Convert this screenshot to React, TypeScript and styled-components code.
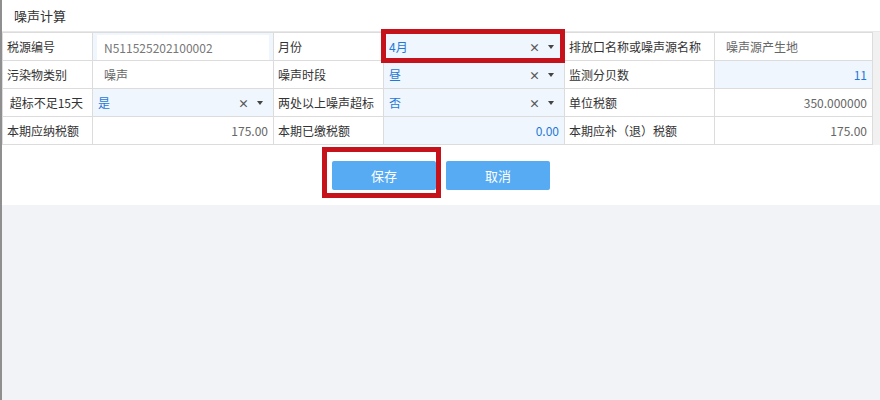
import styled, { createGlobalStyle, css } from 'styled-components';

const GlobalStyle = createGlobalStyle`
  html, body {
    margin: 0;
    padding: 0;
  }
  body {
    font-family: "Noto Sans CJK SC", "Noto Sans", "Liberation Sans", sans-serif;
    font-size: 12px;
    color: #333;
  }
`;

const Page = styled.div`
  display: flex;
  flex-direction: column;
  height: 400px;
  box-sizing: border-box;
  border-left: 2px solid #8f8f8f;
  background: #f2f3f7;
`;

const Panel = styled.div`
  background: #fff;
  display: flex;
  flex-direction: column;
`;

const Header = styled.div`
  height: 31px;
  display: flex;
  align-items: center;
  padding-left: 12px;
  font-size: 13px;
  color: #333;
  border-bottom: 1px solid #e8e8e8;
`;

const TableRow = styled.div`
  display: flex;
`;

const Grid = styled.div`
  display: grid;
  grid-template-columns: 90px 181px 110px 181px 150px 158px;
  grid-auto-rows: 28px;
  border-left: 1px solid #dcdcdc;
  border-top: 1px solid #dcdcdc;
`;

const ScrollTrack = styled.div`
  flex: 1;
  background: #f1f1f1;
`;

const cellBase = css`
  box-sizing: border-box;
  border-right: 1px solid #dcdcdc;
  border-bottom: 1px solid #dcdcdc;
  display: flex;
  align-items: center;
  white-space: nowrap;
  overflow: hidden;
  position: relative;
`;

const Label = styled.div`
  ${cellBase};
  padding-left: 4px;
  color: #333;
`;

type ValueProps = { $edit?: boolean; $right?: boolean; $marked?: boolean };

const Value = styled.div<ValueProps>`
  ${cellBase};
  padding: 0 ${({ $right }) => ($right ? '5px' : '0')} 0 ${({ $edit }) => ($edit ? '5px' : '11px')};
  justify-content: ${({ $right }) => ($right ? 'flex-end' : 'flex-start')};
  background: ${({ $edit }) => ($edit ? '#eff6fd' : '#fff')};
  color: ${({ $edit }) => ($edit ? '#1f78d6' : '#666')};
  overflow: visible;
  ${({ $marked }) =>
    $marked &&
    css`
      &::after {
        content: '';
        position: absolute;
        left: -3px;
        right: -1px;
        top: -4px;
        bottom: -3px;
        border: 5px solid #c6121a;
        pointer-events: none;
        z-index: 2;
      }
    `}
`;

const InsetValue = styled.div`
  ${cellBase};
  background: #eff6fd;
  padding: 2px 4px 0 4px;
`;

const InsetBox = styled.div`
  flex: 1;
  align-self: stretch;
  background: #fff;
  display: flex;
  align-items: center;
  padding-left: 7px;
  color: #777;
`;

const SelectText = styled.span`
  flex: 1;
`;

const Clear = styled.span`
  color: #555;
  font-size: 11px;
  font-weight: bold;
  margin-right: 8px;
`;

const Caret = styled.span`
  width: 0;
  height: 0;
  border-left: 3px solid transparent;
  border-right: 3px solid transparent;
  border-top: 4px solid #444;
  margin-right: 10px;
`;

const ButtonBar = styled.div`
  display: flex;
  justify-content: center;
  gap: 10px;
  padding: 16px 0 15px 0;
`;

const Button = styled.button<{ $marked?: boolean }>`
  position: relative;
  width: 104px;
  height: 29px;
  border: none;
  border-radius: 2px;
  background: #56abf3;
  color: #fff;
  font-family: inherit;
  font-size: 13px;
  cursor: pointer;
  ${({ $marked }) =>
    $marked &&
    css`
      &::after {
        content: '';
        position: absolute;
        left: -10px;
        right: -5px;
        top: -14px;
        bottom: -8px;
        border: 5px solid #c6121a;
        pointer-events: none;
      }
    `}
`;

const Select = ({ value, marked }: { value: string; marked?: boolean }) => (
  <Value $edit $marked={marked}>
    <SelectText>{value}</SelectText>
    <Clear>×</Clear>
    <Caret />
  </Value>
);

export default function App() {
  return (
    <>
      <GlobalStyle />
      <Page>
        <Panel>
          <Header>噪声计算</Header>
          <TableRow>
            <Grid>
              <Label>税源编号</Label>
              <InsetValue>
                <InsetBox>N511525202100002</InsetBox>
              </InsetValue>
              <Label>月份</Label>
              <Select value="4月" marked />
              <Label>排放口名称或噪声源名称</Label>
              <Value>噪声源产生地</Value>

              <Label>污染物类别</Label>
              <Value>噪声</Value>
              <Label>噪声时段</Label>
              <Select value="昼" />
              <Label>监测分贝数</Label>
              <Value $edit $right>11</Value>

              <Label>&nbsp;超标不足15天</Label>
              <Select value="是" />
              <Label>两处以上噪声超标</Label>
              <Select value="否" />
              <Label>单位税额</Label>
              <Value $right>350.000000</Value>

              <Label>本期应纳税额</Label>
              <Value $right>175.00</Value>
              <Label>本期已缴税额</Label>
              <Value $edit $right>0.00</Value>
              <Label>本期应补（退）税额</Label>
              <Value $right>175.00</Value>
            </Grid>
            <ScrollTrack />
          </TableRow>
          <ButtonBar>
            <Button $marked>保存</Button>
            <Button>取消</Button>
          </ButtonBar>
        </Panel>
      </Page>
    </>
  );
}
